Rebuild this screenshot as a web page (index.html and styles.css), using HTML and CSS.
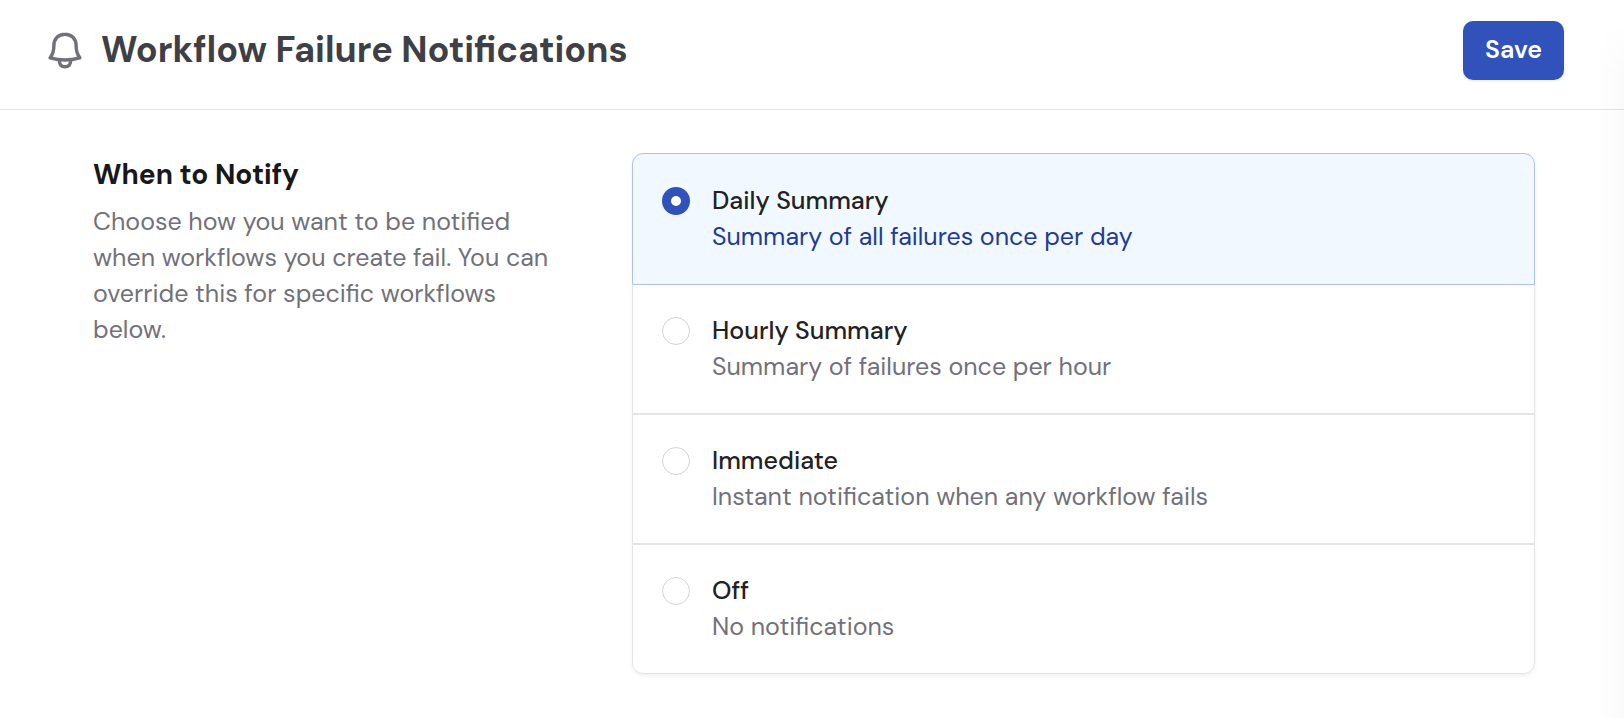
FILE: index.html
```html
<!DOCTYPE html>
<html lang="en">
<head>
<meta charset="utf-8">
<meta name="viewport" content="width=device-width, initial-scale=1">
<title>Workflow Failure Notifications</title>
<link rel="stylesheet" href="styles.css">
</head>
<body>
<form class="page">
  <header class="page-header">
    <svg class="bell" viewBox="0 0 34 38" fill="none" stroke="currentColor" stroke-width="3.4" stroke-linejoin="round" aria-hidden="true">
      <path d="M17 2.2C10.600 2.200 5.900 6.800 5.900 13.400C5.900 18.500 4.700 22.300 2.200 25.800C11.500 28.600 22.500 28.600 31.800 25.800C29.300 22.300 28.100 18.500 28.100 13.400C28.100 6.800 23.400 2.200 17 2.200Z"/>
      <path d="M11.500 28C10.900 32.400 13.300 34.800 17 34.800C20.700 34.800 23.100 32.400 22.500 28"/>
    </svg>
    <h1 class="title">Workflow Failure Notifications</h1>
    <button class="save" type="submit">Save</button>
  </header>
  <main class="settings">
    <section class="intro">
      <h2 class="intro-title" id="when">When to Notify</h2>
      <p class="intro-text">Choose how you want to be notified when workflows you create fail. You can override this for specific workflows below.</p>
    </section>
    <div class="options" role="radiogroup" aria-labelledby="when">
      <label class="option">
        <input class="radio" type="radio" name="notify" value="daily" checked>
        <span class="option-body"><span class="option-name">Daily Summary</span><span class="option-text">Summary of all failures once per day</span></span>
      </label>
      <label class="option">
        <input class="radio" type="radio" name="notify" value="hourly">
        <span class="option-body"><span class="option-name">Hourly Summary</span><span class="option-text">Summary of failures once per hour</span></span>
      </label>
      <label class="option">
        <input class="radio" type="radio" name="notify" value="immediate">
        <span class="option-body"><span class="option-name">Immediate</span><span class="option-text">Instant notification when any workflow fails</span></span>
      </label>
      <label class="option">
        <input class="radio" type="radio" name="notify" value="off">
        <span class="option-body"><span class="option-name">Off</span><span class="option-text">No notifications</span></span>
      </label>
    </div>
  </main>
</form>
</body>
</html>
```

FILE: styles.css
```css
* {
  box-sizing: border-box;
}

body {
  margin: 0;
  background: #fff;
  color: #18181b;
  font-family: "DM Sans", Inter, "Liberation Sans", sans-serif;
  font-size: 25px;
  font-optical-sizing: none;
  line-height: 36px;
}

.page {
  position: relative;
  min-height: 100vh;
}

/* soft shade along the right edge of the panel */
.page::after {
  content: "";
  position: absolute;
  top: 20px;
  right: 0;
  bottom: 0;
  width: 28px;
  background: linear-gradient(to right, #0000, #00000005);
  mask-image: linear-gradient(to bottom, transparent, #000 60px);
  pointer-events: none;
}

.page-header {
  display: flex;
  align-items: center;
  gap: 19px;
  padding: 21px 60px 29px 48px;
  border-bottom: 1px solid #e4e4e7;
}

.bell {
  width: 34px;
  height: 38px;
  color: #71717a;
}

.title {
  flex: 1;
  margin: 0;
  padding-bottom: 2px;
  color: #3f3f46;
  font-size: 36px;
  font-weight: 700;
  line-height: 44px;
}

.save {
  padding: 11px 22px 12px;
  border: 0;
  border-radius: 10px;
  background: #3052ba;
  box-shadow: 0 1px 3px #0000001a;
  color: #fff;
  font: inherit;
  font-weight: 600;
}

.settings {
  display: grid;
  grid-template-columns: 467fr 903fr;
  align-items: start;
  gap: 72px;
  padding: 43px 89px 43px 93px;
}

.intro-title {
  margin: 4px 0 11px;
  font-size: 28px;
  font-weight: 700;
  line-height: 36px;
}

.intro-text {
  margin: 0;
  color: #71717a;
}

.options {
  border-radius: 11px;
  box-shadow: 0 2px 4px #0000000f;
}

.option {
  display: flex;
  gap: 22px;
  padding: 28px 29px;
  border: 1px solid #e4e4e4;
}

.option:first-child {
  padding-block: 29px;
  border-radius: 11px 11px 0 0;
}

.option:last-child {
  border-radius: 0 0 11px 11px;
}

.option:has(:checked) {
  border-color: #aec2f0;
  background: #f1f8ff;
}

.option:has(:checked) + .option {
  border-top: 0;
}

.radio {
  flex: none;
  appearance: none;
  width: 28px;
  height: 28px;
  margin: 4px 0 0;
  border: 1px solid #d4d4d8;
  border-radius: 50%;
  background: #fff;
}

.radio:checked {
  border: 9px solid #3052ba;
}

.option-body {
  display: grid;
}

.option-name {
  color: #222225;
  font-weight: 500;
}

.option-text {
  color: #71717a;
}

.option:has(:checked) .option-text {
  color: #1f3b96;
}
```
